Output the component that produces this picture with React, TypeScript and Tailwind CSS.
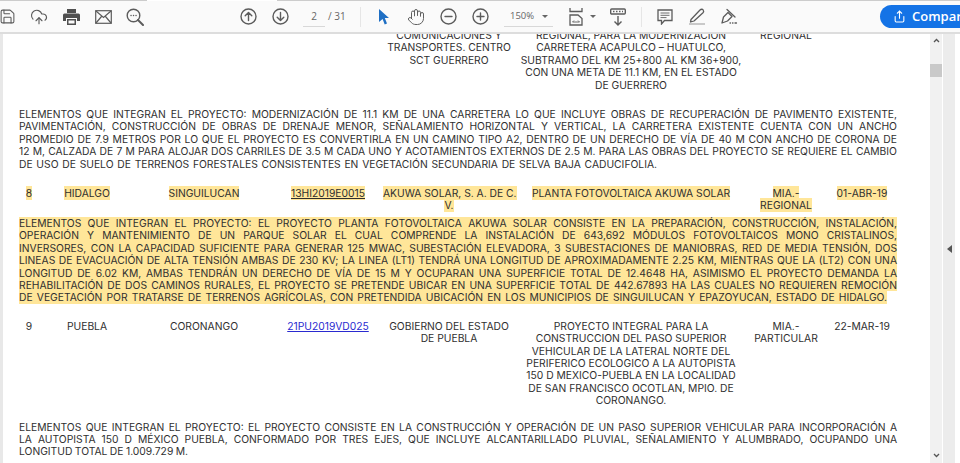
import type { ReactNode } from "react";
import { CloudUpload, Hand, Save, Share } from "lucide-react";

const ICON = "#5c5c5c";

function Slot({ children }: { children: ReactNode }) {
  return <div className="flex h-8 w-8 shrink-0 items-center justify-center">{children}</div>;
}

function CircleIcon({ d }: { d: string }) {
  return (
    <svg width="17" height="17" viewBox="0 0 17 17" fill="none" stroke={ICON} strokeWidth="1.4" strokeLinecap="round" strokeLinejoin="round">
      <circle cx="8.5" cy="8.5" r="7.5" />
      <path d={d} />
    </svg>
  );
}

function Toolbar() {
  return (
    <div className="flex h-[33px] shrink-0 items-center overflow-hidden border-b-2 border-[#dddddd] bg-[#fafafa] font-['Open_Sans',sans-serif] [&>*]:shrink-0">
      <div className="ml-[-9px] flex items-center">
        <Slot><Save size={17} color={ICON} strokeWidth={1.5} /></Slot>
        <Slot><CloudUpload size={18} color={ICON} strokeWidth={1.5} /></Slot>
        <Slot>
          <svg width="17" height="16" viewBox="0 0 17 16" fill="#505050">
            <path d="M4 0h9v4H4z" />
            <path d="M1.500 4.500h14A1.500 1.500 0 0 1 17 6v6h-3V9H3v3H0V6a1.500 1.500 0 0 1 1.500-1.500z" />
            <path d="M4 10h9v6H4zM5.500 11.500v3h6v-3z" fillRule="evenodd" />
          </svg>
        </Slot>
        <Slot>
          <svg width="17" height="14" viewBox="0 0 17 14" fill="none" stroke={ICON} strokeWidth="1.2">
            <rect x="0.7" y="0.7" width="15.6" height="12.6" />
            <path d="M1 1l7.500 6.500L16 1M1 13l5.500-6.500M16 13l-5.500-6.500" />
          </svg>
        </Slot>
        <Slot>
          <svg width="18" height="18" viewBox="0 0 18 18" fill="none" stroke={ICON} strokeWidth="1.4" strokeLinecap="round">
            <circle cx="7.500" cy="7.500" r="6.300" />
            <path d="M12 12l5 5" strokeWidth="2" />
            <path d="M5 7.500h.1M7.500 7.500h.1M10 7.500h.1" />
          </svg>
        </Slot>
      </div>
      <div className="ml-[81px] flex items-center">
        <Slot><CircleIcon d="M8.500 12.500v-8M5.200 7.800l3.300-3.300 3.300 3.300" /></Slot>
        <Slot><CircleIcon d="M8.500 4.500v8M5.200 9.200l3.300 3.300 3.300-3.300" /></Slot>
      </div>
      <div className="ml-[7px] flex h-[20px] w-[22px] items-center justify-center border-b border-[#d8d8d8] text-[10px] text-[#666666]">2</div>
      <span className="ml-[3px] w-[32px] text-[10px] text-[#666666]">/ 31</span>
      <div className="h-[20px] w-px bg-[#e6e6e6]" />
      <div className="ml-[7px] flex items-center">
        <Slot>
          <svg width="12" height="16" viewBox="0 0 12 16" fill="#1f6fc4">
            <path d="M1 0l10 9H6.800L9 14.500l-2.300 1L4.600 10 1 13z" />
          </svg>
        </Slot>
        <Slot><Hand size={18} color={ICON} strokeWidth={1.3} /></Slot>
        <Slot><CircleIcon d="M5 8.500h7" /></Slot>
        <Slot><CircleIcon d="M5 8.500h7M8.500 5v7" /></Slot>
      </div>
      <div className="ml-[8px] flex h-[20px] w-[49px] items-center justify-between border-b border-[#d8d8d8] pl-[6px] pr-[5px] text-[9.5px] text-[#666666]">
        <span>150%</span>
        <span className="h-0 w-0 border-x-[3px] border-t-[3px] border-x-transparent border-t-[#666666]" />
      </div>
      <div className="ml-[7px] flex items-center">
        <Slot>
          <svg width="15" height="18" viewBox="0 0 15 18" fill="none" stroke={ICON} strokeWidth="1.3">
            <path d="M1 0v3.500h12V0M1 17V7h8l4 3.500V17z" />
            <path d="M3.500 14h7M3.500 14l1.500-1.500M10.500 14L9 12.500" strokeWidth="0.9" />
          </svg>
        </Slot>
        <span className="ml-[-2px] h-0 w-0 border-x-[3px] border-t-[3px] border-x-transparent border-t-[#666666]" />
      </div>
      <div className="ml-[6px]">
        <Slot>
          <svg width="16" height="18" viewBox="0 0 16 18" fill="none" stroke={ICON} strokeWidth="1.4">
            <rect x="0.7" y="1" width="14.600" height="5" rx="1" />
            <path d="M3 3.500h1.500M6 3.500h1.500M9 3.500h1.500M12 3.500h1" />
            <path d="M8 8v9M4.500 13.500L8 17l3.500-3.500" />
          </svg>
        </Slot>
      </div>
      <div className="ml-[7px] h-[20px] w-px bg-[#e6e6e6]" />
      <div className="ml-[7px] flex items-center">
        <Slot>
          <svg width="16" height="16" viewBox="0 0 16 16" fill="none" stroke={ICON} strokeWidth="1.3">
            <path d="M1 1h14v10.500H7.500L4.500 15v-3.500H1z" />
            <path d="M3.500 4h9M3.500 6.300h9M3.500 8.600h6" strokeWidth="0.9" />
          </svg>
        </Slot>
        <Slot>
          <svg width="18" height="17" viewBox="0 0 18 17" fill="none" stroke={ICON} strokeWidth="1.3" strokeLinejoin="round">
            <path d="M3 11.500L12 2c1-1 2.500-1 3.200 0s.6 2-.2 2.800L6 13l-3.500 1z" />
            <path d="M1 16h16" stroke="#bdbdbd" strokeWidth="1.600" />
          </svg>
        </Slot>
        <Slot>
          <svg width="18" height="17" viewBox="0 0 18 17" fill="none" stroke={ICON} strokeWidth="1.3" strokeLinecap="round" strokeLinejoin="round">
            <path d="M2 15l1.500-6L8 4.500l4 4L7.500 13z" />
            <path d="M7 1.500L15 9M10 15h.5M12.500 15h.5M15 15h1.500" />
          </svg>
        </Slot>
      </div>
      <div className="ml-[135px] flex h-[23px] w-[100px] items-center gap-[6px] rounded-l-full bg-[#1473e6] pl-[13px] text-[13px] font-semibold text-white">
        <Share size={13} strokeWidth={2} />
        <span>Compartir</span>
      </div>
    </div>
  );
}

function Row({ cells, mark }: { cells: ReactNode[]; mark?: boolean }) {
  return (
    <div className="grid grid-cols-[20px_96px_138px_110px_132px_232px_78px_74px] text-center">
      {cells.map((cell, i) => (
        <div key={i} className="whitespace-nowrap">
          {mark ? <span className="bg-[#ffe699] py-[1px] [box-decoration-break:clone]">{cell}</span> : cell}
        </div>
      ))}
    </div>
  );
}

// every line is justified on its own; the last one stops at the width given by lastWidth
function Para({ lines, mark, lastWidth }: { lines: string[]; mark?: boolean; lastWidth: string }) {
  return (
    <div>
      {lines.map((line, i) => (
        <div
          key={i}
          className={`whitespace-nowrap text-justify [word-spacing:-2px] [text-align-last:justify] ${mark ? "bg-[#ffe699]" : ""} ${i === lines.length - 1 ? lastWidth : ""}`}
        >
          {line}
        </div>
      ))}
    </div>
  );
}

export default function App() {
  return (
    <div className="flex h-[463px] w-[960px] flex-col overflow-hidden bg-white">
      <div className="flex h-px shrink-0">
        <div className="w-[147px] bg-[#cccccc]" />
        <div className="w-[130px] bg-white" />
        <div className="flex-1 bg-[#cccccc]" />
      </div>
      <Toolbar />
      <div className="flex min-h-0 flex-1">
        <div className="w-[3px] shrink-0 bg-[#e8e8e8]" />
        <div className="min-w-0 flex-1 overflow-hidden pl-[16px] font-['Inter',sans-serif] text-[10.3px] leading-[12.4px] text-[#2f2f2f]">
          <div className="mt-[-5px] w-[878px]">
            <Row
              cells={[
                "",
                "",
                "",
                "",
                <>COMUNICACIONES Y<br />TRANSPORTES. CENTRO<br />SCT GUERRERO</>,
                <>REGIONAL, PARA LA MODERNIZACIÓN<br />CARRETERA ACAPULCO – HUATULCO,<br />SUBTRAMO DEL KM 25+800 AL KM 36+900,<br />CON UNA META DE 11.1 KM, EN EL ESTADO<br />DE GUERRERO</>,
                "REGIONAL",
                "",
              ]}
            />
            <div className="mt-[17px]">
              <Para
                lastWidth="w-[638px]"
                lines={[
                  "ELEMENTOS QUE INTEGRAN EL PROYECTO: MODERNIZACIÓN DE 11.1 KM DE UNA CARRETERA LO QUE INCLUYE OBRAS DE RECUPERACIÓN DE PAVIMENTO EXISTENTE,",
                  "PAVIMENTACIÓN, CONSTRUCCIÓN DE OBRAS DE DRENAJE MENOR, SEÑALAMIENTO HORIZONTAL Y VERTICAL, LA CARRETERA EXISTENTE CUENTA CON UN ANCHO",
                  "PROMEDIO DE 7.9 METROS POR LO QUE EL PROYECTO ES CONVERTIRLA EN UN CAMINO TIPO A2, DENTRO DE UN DERECHO DE VÍA DE 40 M CON ANCHO DE CORONA DE",
                  "12 M, CALZADA DE 7 M PARA ALOJAR DOS CARRILES DE 3.5 M CADA UNO Y ACOTAMIENTOS EXTERNOS DE 2.5 M. PARA LAS OBRAS DEL PROYECTO SE REQUIERE EL CAMBIO",
                  "DE USO DE SUELO DE TERRENOS FORESTALES CONSISTENTES EN VEGETACIÓN SECUNDARIA DE SELVA BAJA CADUCIFOLIA.",
                ]}
              />
            </div>
            <div className="mt-[17px]">
              <Row
                mark
                cells={[
                  "8",
                  "HIDALGO",
                  "SINGUILUCAN",
                  <span className="underline">13HI2019E0015</span>,
                  <>AKUWA SOLAR, S. A. DE C.<br />V.</>,
                  "PLANTA FOTOVOLTAICA AKUWA SOLAR",
                  <>MIA.-<br />REGIONAL</>,
                  "01-ABR-19",
                ]}
              />
            </div>
            <div className="mt-[5px]">
              <Para
                mark
                lastWidth="w-[868px]"
                lines={[
                  "ELEMENTOS QUE INTEGRAN EL PROYECTO: EL PROYECTO PLANTA FOTOVOLTAICA AKUWA SOLAR CONSISTE EN LA PREPARACIÓN, CONSTRUCCIÓN, INSTALACIÓN,",
                  "OPERACIÓN Y MANTENIMIENTO DE UN PARQUE SOLAR EL CUAL COMPRENDE LA INSTALACIÓN DE 643,692 MÓDULOS FOTOVOLTAICOS MONO CRISTALINOS,",
                  "INVERSORES, CON LA CAPACIDAD SUFICIENTE PARA GENERAR 125 MWAC, SUBESTACIÓN ELEVADORA, 3 SUBESTACIONES DE MANIOBRAS, RED DE MEDIA TENSIÓN, DOS",
                  "LINEAS DE EVACUACIÓN DE ALTA TENSIÓN AMBAS DE 230 KV; LA LINEA (LT1) TENDRÁ UNA LONGITUD DE APROXIMADAMENTE 2.25 KM, MIENTRAS QUE LA (LT2) CON UNA",
                  "LONGITUD DE 6.02 KM, AMBAS TENDRÁN UN DERECHO DE VÍA DE 15 M Y OCUPARAN UNA SUPERFICIE TOTAL DE 12.4648 HA, ASIMISMO EL PROYECTO DEMANDA LA",
                  "REHABILITACIÓN DE DOS CAMINOS RURALES, EL PROYECTO SE PRETENDE UBICAR EN UNA SUPERFICIE TOTAL DE 442.67893 HA LAS CUALES NO REQUIEREN REMOCIÓN",
                  "DE VEGETACIÓN POR TRATARSE DE TERRENOS AGRÍCOLAS, CON PRETENDIDA UBICACIÓN EN LOS MUNICIPIOS DE SINGUILUCAN Y EPAZOYUCAN, ESTADO DE HIDALGO.",
                ]}
              />
            </div>
            <div className="mt-[16px]">
              <Row
                cells={[
                  "9",
                  "PUEBLA",
                  "CORONANGO",
                  <span className="text-[#2a2ad0] underline">21PU2019VD025</span>,
                  <>GOBIERNO DEL ESTADO<br />DE PUEBLA</>,
                  <>PROYECTO INTEGRAL PARA LA<br />CONSTRUCCION DEL PASO SUPERIOR<br />VEHICULAR DE LA LATERAL NORTE DEL<br />PERIFERICO ECOLOGICO A LA AUTOPISTA<br />150 D MEXICO-PUEBLA EN LA LOCALIDAD<br />DE SAN FRANCISCO OCOTLAN, MPIO. DE<br />CORONANGO.</>,
                  <>MIA.-<br />PARTICULAR</>,
                  "22-MAR-19",
                ]}
              />
            </div>
            <div className="mt-[14px]">
              <Para
                lastWidth="w-[169px]"
                lines={[
                  "ELEMENTOS QUE INTEGRAN EL PROYECTO: EL PROYECTO CONSISTE EN LA CONSTRUCCIÓN Y OPERACIÓN DE UN PASO SUPERIOR VEHICULAR PARA INCORPORACIÓN A",
                  "LA AUTOPISTA 150 D MÉXICO PUEBLA, CONFORMADO POR TRES EJES, QUE INCLUYE ALCANTARILLADO PLUVIAL, SEÑALAMIENTO Y ALUMBRADO, OCUPANDO UNA",
                  "LONGITUD TOTAL DE 1.009.729 M.",
                ]}
              />
            </div>
          </div>
        </div>
        <div className="flex w-[12px] shrink-0 flex-col items-center bg-[#f1f1f1] pt-[4px] text-[#555555]">
          <svg width="7" height="5" viewBox="0 0 7 5" fill="none" stroke="currentColor" strokeWidth="1.3"><path d="M1 4l2.500-2.500L6 4" /></svg>
          <div className="mt-[21px] h-[13px] w-full bg-[#c9c9c9]" />
          <svg className="mt-auto mb-[5px]" width="7" height="5" viewBox="0 0 7 5" fill="none" stroke="currentColor" strokeWidth="1.3"><path d="M1 1l2.500 2.500L6 1" /></svg>
        </div>
        <div className="w-px shrink-0 bg-white" />
        <div className="flex w-[12px] shrink-0 items-center justify-center bg-[#ececec]">
          <span className="h-0 w-0 border-y-[4px] border-r-[5px] border-y-transparent border-r-[#555555]" />
        </div>
        <div className="w-[5px] shrink-0 bg-white" />
      </div>
    </div>
  );
}
